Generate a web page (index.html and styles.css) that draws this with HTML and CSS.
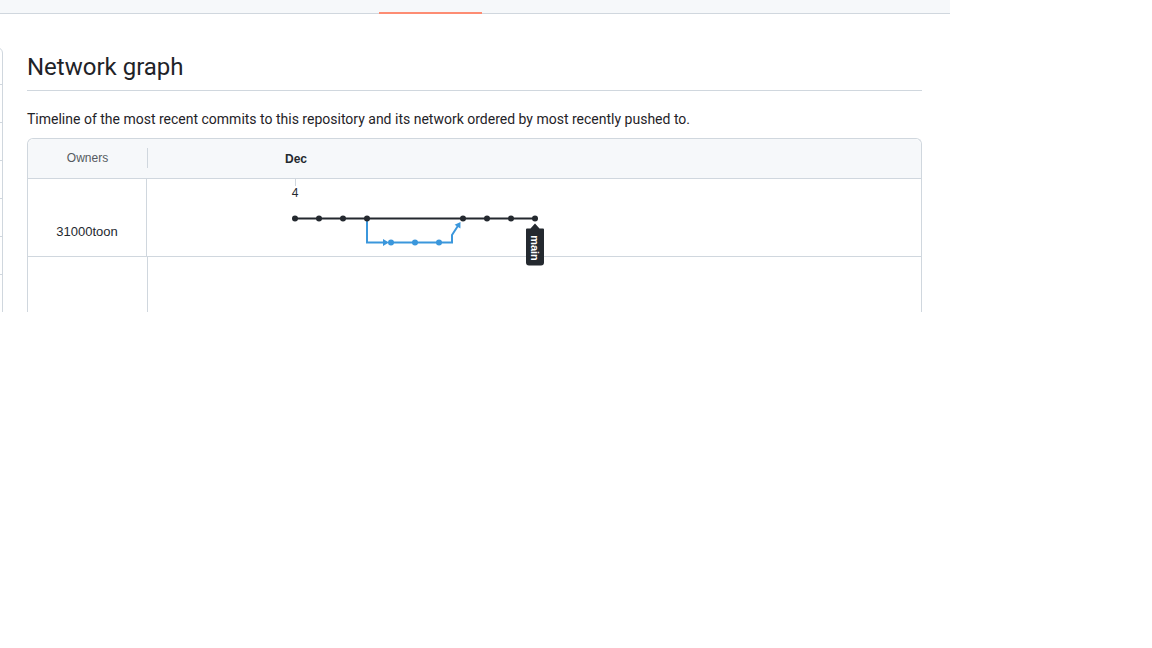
FILE: index.html
```html
<!DOCTYPE html>
<html>
<head>
<meta charset="utf-8">
<link rel="stylesheet" href="styles.css">
</head>
<body>
<header class="topbar">
  <nav class="tabs">
    <span class="tab tab-active"></span>
  </nav>
</header>
<div class="page">
  <aside class="sidebar">
    <div class="side-item"></div>
    <div class="side-item"></div>
    <div class="side-item"></div>
    <div class="side-item"></div>
    <div class="side-item"></div>
    <div class="side-item"></div>
    <div class="side-item"></div>
  </aside>
  <main class="main">
    <h2 class="title">Network graph</h2>
    <p class="desc">Timeline of the most recent commits to this repository and its network ordered by most recently pushed to.</p>
    <div class="network">
      <div class="net-head">
        <div class="owners-head"><span>Owners</span></div>
        <div class="months"><span class="month">Dec</span></div>
      </div>
      <div class="net-row">
        <div class="owner">31000toon</div>
        <div class="graph">
          <svg class="graph-svg" width="774" height="77" viewBox="0 0 774 77">
            <line x1="148.5" y1="0" x2="148.5" y2="7" stroke="#d0d7de" stroke-width="1"/>
            <text x="148" y="17.5" text-anchor="middle" class="day">4</text>
            <line x1="148" y1="39.5" x2="388" y2="39.5" stroke="#24292f" stroke-width="2"/>
            <path d="M220 39.5 V63.5 H238" fill="none" stroke="#3b97dc" stroke-width="2"/>
            <path d="M236 60 L242 63.5 L236 67 Z" fill="#3b97dc"/>
            <path d="M244 63.5 H305 V56 L311.5 46" fill="none" stroke="#3b97dc" stroke-width="2"/>
            <path d="M313.5 43 L307.6 45.8 L313.4 49.6 Z" fill="#3b97dc"/>
            <g fill="#3b97dc">
              <circle cx="244" cy="63.5" r="3"/>
              <circle cx="268" cy="63.5" r="3"/>
              <circle cx="292" cy="63.5" r="3"/>
            </g>
            <g fill="#24292f">
              <circle cx="148" cy="39.5" r="3"/>
              <circle cx="172" cy="39.5" r="3"/>
              <circle cx="196" cy="39.5" r="3"/>
              <circle cx="220" cy="39.5" r="3"/>
              <circle cx="316" cy="39.5" r="3"/>
              <circle cx="340" cy="39.5" r="3"/>
              <circle cx="364" cy="39.5" r="3"/>
              <circle cx="388" cy="39.5" r="3"/>
            </g>
            <path d="M388 44.5 L392.5 49.5 L396 49.5 Q397 49.5 397 50.5 L397 83.5 Q397 86.5 394 86.5 L382 86.5 Q379 86.5 379 83.5 L379 50.5 Q379 49.5 380 49.5 L383.5 49.5 Z" fill="#24292f"/>
            <text x="388" y="69" class="label" transform="rotate(90 388 69)" text-anchor="middle" dominant-baseline="central">main</text>
          </svg>
        </div>
      </div>
      <div class="net-row net-row-empty">
        <div class="owner"></div>
        <div class="graph"></div>
      </div>
    </div>
  </main>
</div>
</body>
</html>
```
FILE: styles.css
```css
* { box-sizing: border-box; }
html, body { margin: 0; padding: 0; background: #ffffff; }
body {
  font-family: "Segoe UI", Roboto, "Liberation Sans", sans-serif;
  color: #1f2328;
}
.topbar {
  width: 950px;
  height: 14px;
  background: #f6f8fa;
  border-bottom: 1px solid #d0d7de;
}
.tabs { display: flex; height: 13px; padding-left: 379px; }
.tab { display: block; width: 103px; height: 14px; }
.tab-active { border-bottom: 2px solid #fd8c73; }

.page {
  display: flex;
  height: 298px;
  overflow: hidden;
}
.sidebar {
  flex: 0 0 auto;
  width: 13px;
  margin-left: -10px;
  margin-top: 33px;
  border: 1px solid #d0d7de;
  border-radius: 0 6px 0 0;
  align-self: flex-start;
}
.side-item { height: 38px; border-top: 1px solid #d0d7de; }
.side-item:first-child { height: 36px; border-top: 0; }

.main {
  margin-left: 24px;
  width: 895px;
  padding-top: 35px;
}
.title {
  margin: 0;
  font-size: 24px;
  font-weight: 400;
  line-height: 36px;
  padding-bottom: 5px;
  border-bottom: 1px solid #d0d7de;
}
.desc {
  margin: 18px 0 0;
  font-size: 14px;
  line-height: 21px;
}
.network {
  margin-top: 8px;
  border: 1px solid #d0d7de;
  border-bottom: 0;
  border-radius: 6px 6px 0 0;
  font-family: "Liberation Sans", Arial, sans-serif;
  font-size: 12px;
}
.net-head {
  display: flex;
  height: 40px;
  background: #f6f8fa;
  border-bottom: 1px solid #d0d7de;
  border-radius: 6px 6px 0 0;
}
.owners-head {
  width: 120px;
  display: flex;
  align-items: center;
  padding: 10px 0;
}
.owners-head span {
  display: block;
  flex: 1;
  text-align: center;
  color: #555a60;
  line-height: 19px;
  border-right: 1px solid #d0d7de;
  margin-top: -2px;
  padding-top: 1px;
}
.months { flex: 1; display: flex; align-items: center; }
.month {
  margin-left: 137px;
  font-weight: 700;
  color: #24292f;
}
.net-row {
  display: flex;
  height: 78px;
  border-bottom: 1px solid #d0d7de;
}
.net-row-empty { height: 120px; border-bottom: 0; }
.owner {
  width: 120px;
  border-right: 1px solid #d0d7de;
  text-align: center;
  padding-top: 45px;
  color: #24292f;
  font-size: 13px;
}
.graph { flex: 1; position: relative; z-index: 1; }
.graph-svg { display: block; overflow: visible; }
.day { font-family: "Liberation Sans", Arial, sans-serif; font-size: 12px; fill: #24292f; }
.label { font-family: "Liberation Sans", Arial, sans-serif; font-size: 11px; font-weight: 700; fill: #ffffff; }
```
